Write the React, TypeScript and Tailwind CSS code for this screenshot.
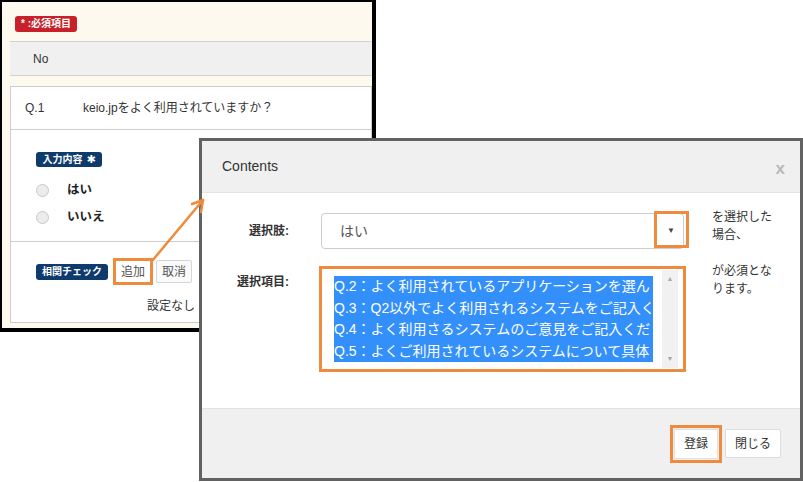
import React from "react";

const ORANGE = "#ef8b3e";

function Radio({ label }: { label: string }) {
  return (
    <div className="flex items-center h-[20px] pl-[25px]">
      <span className="w-[13px] h-[13px] rounded-full border border-[#c8c8c8] bg-[#ececec]" />
      <span className="ml-[18px] text-[12.5px] font-bold text-[#222]">{label}</span>
    </div>
  );
}

function Badge({ children, w, color }: { children: React.ReactNode; w: string; color: string }) {
  return (
    <div
      className={`h-[16px] ${w} rounded-[3px] flex items-center justify-center text-white text-[10px] font-bold leading-none`}
      style={{ backgroundColor: color }}
    >
      {children}
    </div>
  );
}

export default function App() {
  return (
    <div className="relative w-[803px] h-[482px] bg-white overflow-hidden font-['Liberation_Sans','Noto_Sans_CJK_JP',sans-serif] text-[#333]">
      {/* Left panel (background page screenshot) */}
      <div className="w-[376px] h-[332px] border-t-2 border-l-2 border-r-4 border-b-4 border-black bg-[#fdf9ef] pt-[14px] pl-[8px] overflow-hidden">
        <div className="ml-[5px] h-[16px] w-[62px] rounded-[3px] bg-[#c8202a] flex items-center justify-center text-white text-[10px] font-bold leading-none">
          * :必須項目
        </div>
        <div className="mt-[9px] h-[35px] border-y border-[#d2d2d2] bg-[#f0f0f0] flex items-center pl-[23px] text-[12px]">
          No
        </div>
        <div className="mt-[10px] h-[237px] border border-[#cccccc] bg-white">
          <div className="h-[43px] border-b border-[#cccccc] flex items-center pl-[14px] text-[12px]">
            <span className="w-[58px]">Q.1</span>
            <span>keio.jpをよく利用されていますか？</span>
          </div>
          <div className="mt-[22px] pl-[25px]">
            <div className="h-[15px] w-[66px] rounded-[3px] bg-[#0e3a6c] flex items-center justify-center gap-[4px] text-white text-[10px] font-bold leading-none">
              <span>入力内容</span>
              <span className="font-['DejaVu_Sans',sans-serif] text-[11px]">✱</span>
            </div>
          </div>
          <div className="mt-[13px]">
            <Radio label="はい" />
          </div>
          <div className="mt-[7px]">
            <Radio label="いいえ" />
          </div>
          <div className="mt-[14px] border-t border-[#cccccc]" />
          <div className="mt-[16px] pl-[25px] flex items-center h-[27px]">
            <Badge w="w-[72px]" color="#0e3a6c">相関チェック</Badge>
            <div className="ml-[5px] w-[40px] h-[27px] border-[3px] flex items-center justify-center" style={{ borderColor: ORANGE }}>
              <div className="w-[32px] h-[21px] bg-white flex items-center justify-center text-[12px] text-[#555]">追加</div>
            </div>
            <div className="ml-[3px] w-[36px] h-[23px] border border-[#d6d6d6] rounded-[2px] bg-[#fafafa] flex items-center justify-center text-[12px] text-[#555]">
              取消
            </div>
          </div>
          <div className="mt-[13px] ml-[136px] h-[16px] flex items-center text-[12px] text-[#333]">設定なし</div>
        </div>
      </div>

      {/* Modal */}
      <div className="absolute left-[199px] top-[138px] w-[604px] h-[343px] border-[3px] border-[#626262] bg-white flex flex-col">
        <div className="h-[52px] bg-[#f0f0f0] border-b border-[#e3e3e3] flex items-center justify-between pl-[20px] pr-[15px]">
          <span className="text-[14px] text-[#333]">Contents</span>
          <span className="mt-[3px] text-[17px] font-bold text-[#b8b8b8] leading-none">x</span>
        </div>
        <div className="flex-1 pt-[20px]">
          {/* Row 1 */}
          <div className="flex items-start">
            <div className="w-[87px] h-[36px] flex items-center justify-end text-[12px] font-bold text-[#333]">選択肢:</div>
            <div className="relative ml-[32px] w-[363px] h-[36px] border border-[#cccccc] rounded-[4px] flex items-center pl-[18px] text-[14px] text-[#555]">
              はい
              <span className="absolute right-[8px] top-[11px] text-[8px] text-[#444]">▼</span>
              <div className="absolute left-[332px] top-[-3px] w-[35px] h-[37px] border-[3px]" style={{ borderColor: ORANGE }} />
            </div>
            <div className="ml-[28px] mt-[-5px] text-[12px] leading-[18px] text-[#333]">
              を選択した
              <br />
              場合、
            </div>
          </div>
          {/* Row 2 */}
          <div className="flex items-start mt-[17px]">
            <div className="w-[87px] h-[18px] mt-[7px] flex items-center justify-end text-[12px] font-bold text-[#333]">選択項目:</div>
            <div className="ml-[30px] w-[367px] h-[106px] border-[3px] bg-white flex" style={{ borderColor: ORANGE }}>
              <div className="pl-[12px] pt-[7px] w-[332px]">
                <div className="w-[319px] overflow-hidden bg-[#3390fa] text-white text-[14px] leading-[21.5px] whitespace-nowrap">
                  <div>Q.2：よく利用されているアプリケーションを選ん</div>
                  <div>Q.3：Q2以外でよく利用されるシステムをご記入く</div>
                  <div>Q.4：よく利用さるシステムのご意見をご記入くだ</div>
                  <div>Q.5：よくご利用されているシステムについて具体</div>
                </div>
              </div>
              <div className="ml-[8px] mt-[1px] w-[16px] h-[98px] bg-[#f1f1f1] flex flex-col items-center justify-between py-[4px] text-[7px] text-[#a8a8a8]">
                <span>▲</span>
                <span>▼</span>
              </div>
            </div>
            <div className="ml-[26px] mt-[-4px] text-[12px] leading-[18px] text-[#333]">
              が必須とな
              <br />
              ります。
            </div>
          </div>
        </div>
        <div className="h-[70px] bg-[#f0f0f0] border-t border-[#e2e2e2] flex items-center justify-end pr-[19px]">
          <div className="w-[52px] h-[38px] border-[3px] flex items-center justify-center" style={{ borderColor: ORANGE }}>
            <div className="w-[44px] h-[30px] bg-white border border-[#e0e0e0] flex items-center justify-center text-[12px] text-[#333]">登録</div>
          </div>
          <div className="ml-[3px] w-[56px] h-[29px] bg-white border border-[#dddddd] rounded-[2px] flex items-center justify-center text-[12px] text-[#333]">
            閉じる
          </div>
        </div>
      </div>

      {/* Annotation arrow */}
      <svg className="absolute left-0 top-0 pointer-events-none" width="803" height="482" viewBox="0 0 803 482">
        <g stroke={ORANGE} strokeWidth="2.5" strokeLinecap="round" fill="none">
          <line x1="152" y1="261" x2="203" y2="200" />
          <line x1="203" y1="200" x2="192" y2="204" />
          <line x1="203" y1="200" x2="201" y2="212" />
        </g>
      </svg>
    </div>
  );
}
